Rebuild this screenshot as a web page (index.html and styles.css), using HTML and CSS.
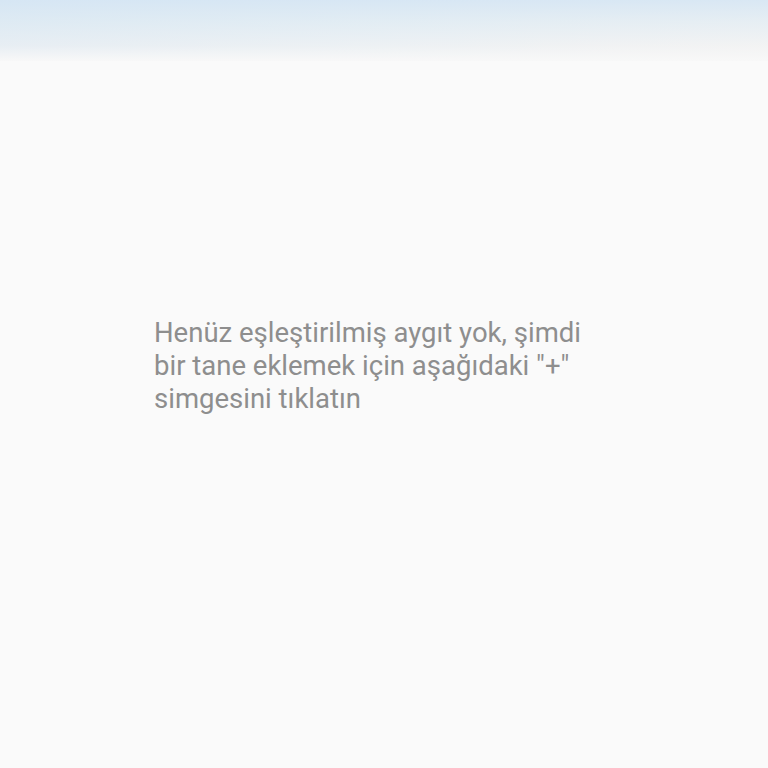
FILE: index.html
```html
<!DOCTYPE html>
<html lang="tr">
<head>
<meta charset="utf-8">
<link rel="stylesheet" href="styles.css">
</head>
<body>
<div class="page">
  <div class="header"></div>
  <div class="empty">
    <p class="message">Henüz eşleştirilmiş aygıt yok, şimdi bir tane eklemek için aşağıdaki "+" simgesini tıklatın</p>
  </div>
</div>
</body>
</html>
```
FILE: styles.css
```css
html, body {
  margin: 0;
  padding: 0;
  background: #fafafa;
}
.page {
  width: 768px;
  height: 768px;
  display: flex;
  flex-direction: column;
  background: #fafafa;
}
.header {
  height: 61px;
  flex: none;
  background:
    linear-gradient(180deg, rgba(214,230,244,0.9) 0%, rgba(225,236,243,0.7) 35%, rgba(243,243,243,0.6) 75%, rgba(248,248,248,1) 100%),
    linear-gradient(90deg, #d6e6f4 0%, #e4eef5 50%, #eef1f4 80%, #f2f3f4 100%);
}
.empty {
  padding: 255px 0 0 154px;
}
.message {
  margin: 0;
  width: 445px;
  font-family: Roboto, "Noto Sans", sans-serif;
  font-size: 27.5px;
  line-height: 33px;
  color: #8e8e8e;
}
```
